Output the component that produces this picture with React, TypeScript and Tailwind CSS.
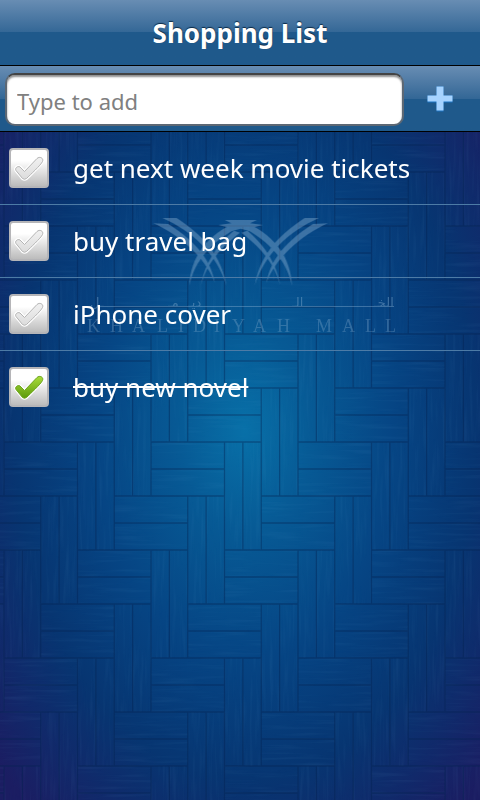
import { useState } from 'react'

const initialItems = [
  { id: 1, text: 'get next week movie tickets', done: false },
  { id: 2, text: 'buy travel bag', done: false },
  { id: 3, text: 'iPhone cover', done: false },
  { id: 4, text: 'buy new novel', done: true },
]

// Basket weave: every row holds one flat pair and two upright ones, moved one cell to the left per row
const CELL_W = 36.75
const CELL_H = 54
const rows = [0, 1, 2, 3]

const flatCells = rows.flatMap((r) => {
  const x = ((4 - r) % 4) * CELL_W
  const y = r * CELL_H
  return [
    { x, y },
    { x: x - 4 * CELL_W, y },
  ]
})

const uprightCells = rows.flatMap((r) => {
  const x = ((6 - r) % 4) * CELL_W
  const y = r * CELL_H
  return [
    { x, y },
    { x, y: y - 4 * CELL_H },
  ]
})

const flatPath = flatCells
  .map(({ x, y }) => `M${x} ${y}h${CELL_W * 2}v${CELL_H}h${-CELL_W * 2}z`)
  .join('')
const uprightPath = uprightCells
  .map(({ x, y }) => `M${x} ${y}h${CELL_W}v${CELL_H * 2}h${-CELL_W}z`)
  .join('')
const seamPath =
  flatCells.map(({ x, y }) => `M${x} ${y + CELL_H / 2}h${CELL_W * 2}`).join('') +
  uprightCells.map(({ x, y }) => `M${x + CELL_W / 2} ${y}v${CELL_H * 2}`).join('')

const weave = { x: 4, y: 10, width: CELL_W * 4, height: CELL_H * 4, patternUnits: 'userSpaceOnUse' }

const tickPath =
  'M8 22.500C6.500 20.500 9.500 17.500 12 19L16.500 23.500L29 10.500C31.500 8 36 10 34.500 13.500C33 17 22 27 18.500 30.500Q16.500 32 14.500 30.500Z'

function Blades() {
  return (
    <>
      <path d="M97 54H140C185 85 270 140 290 258C262 165 190 95 97 54Z" />
      <path d="M70 70L115 72C170 108 240 160 255 250C228 175 150 105 70 70Z" />
      <path d="M296 78C236 108 180 170 178 258C190 198 228 138 314 88Z" />
      <path d="M312 92C268 128 224 184 213 258C226 202 260 152 330 98Z" />
    </>
  )
}

function Backdrop() {
  return (
    <svg className="absolute inset-0 h-full w-full" aria-hidden="true">
      <defs>
        <radialGradient id="glow" gradientUnits="userSpaceOnUse" cx="0" cy="0" r="1" gradientTransform="translate(245 430) scale(330 500)">
          <stop offset="0" stopColor="#0870a8" />
          <stop offset="0.2" stopColor="#075a95" />
          <stop offset="0.45" stopColor="#064584" />
          <stop offset="0.7" stopColor="#073571" />
          <stop offset="0.86" stopColor="#11296a" />
          <stop offset="1" stopColor="#1b1d62" />
        </radialGradient>
        <pattern id="flat" {...weave}>
          <path d={flatPath} fill="#fff" />
        </pattern>
        <pattern id="upright" {...weave}>
          <path d={uprightPath} fill="#fff" />
        </pattern>
        <pattern id="seams" {...weave}>
          <path d={flatPath + uprightPath + seamPath} fill="none" stroke="#02204f" strokeOpacity="0.4" strokeWidth="1.3" />
        </pattern>
        <mask id="flatMask">
          <rect width="100%" height="100%" fill="url(#flat)" />
        </mask>
        <mask id="uprightMask">
          <rect width="100%" height="100%" fill="url(#upright)" />
        </mask>
        <filter id="grainFlat" x="0" y="0" width="100%" height="100%">
          <feTurbulence type="fractalNoise" baseFrequency="0.02 0.3" numOctaves="2" seed="4" />
          <feColorMatrix values="0 0 0 0 0.2  0 0 0 0 0.5  0 0 0 0 0.8  2 0 0 0 -0.9" />
        </filter>
        <filter id="grainUpright" x="0" y="0" width="100%" height="100%">
          <feTurbulence type="fractalNoise" baseFrequency="0.3 0.02" numOctaves="2" seed="9" />
          <feColorMatrix values="0 0 0 0 0.2  0 0 0 0 0.5  0 0 0 0 0.8  2 0 0 0 -0.9" />
        </filter>
      </defs>
      <rect width="100%" height="100%" fill="url(#glow)" />
      <g mask="url(#flatMask)">
        <rect width="100%" height="100%" filter="url(#grainFlat)" opacity="0.07" />
      </g>
      <g mask="url(#uprightMask)">
        <rect width="100%" height="100%" filter="url(#grainUpright)" opacity="0.07" />
      </g>
      <rect width="100%" height="100%" fill="url(#seams)" />

      {/* Mall logo */}
      <g fill="#8fb4d4" opacity="0.4">
        <g transform="translate(130 200) scale(0.3333)">
          <Blades />
          <g transform="translate(664 0) scale(-1 1)">
            <Blades />
          </g>
          <path d="M284 60H381L360 70L399 75L360 85L370 96L332 86L294 96L304 85L265 75L304 70Z" />
        </g>
        <path d="M98 306H394V307H98Z" />
        <g fontFamily='"DejaVu Sans", sans-serif' fontSize="13">
          <text x="374" y="307">الخـ</text>
          <text x="292" y="307">الـ</text>
          <text x="188" y="307">ديـ</text>
          <text x="168" y="307">مـ</text>
          <text x="90" y="307">ـل</text>
        </g>
        <text
          x="87 110 132 157 178 193 214 232 253 277 300 316 342 365 385"
          y="332"
          fontFamily='"Liberation Serif", serif'
          fontSize="18"
          opacity="0.8"
        >
          KHALIDIYAH MALL
        </text>
      </g>
    </svg>
  )
}

function CheckBox({ label, checked, onChange }: { label: string; checked: boolean; onChange: () => void }) {
  return (
    <span className="relative block h-10 w-10 shrink-0">
      <input
        type="checkbox"
        aria-label={label}
        checked={checked}
        onChange={onChange}
        className="block h-10 w-10 appearance-none rounded border-2 border-[#b5b5b8] bg-linear-to-b from-white from-30% to-[#bcbcbc]"
      />
      <svg viewBox="0 0 40 40" className="pointer-events-none absolute inset-0 h-10 w-10">
        <defs>
          <linearGradient id="tickOn" x1="0" y1="0" x2="0" y2="1">
            <stop offset="0" stopColor="#a9dc3a" />
            <stop offset="1" stopColor="#5c9a0c" />
          </linearGradient>
          <linearGradient id="tickOff" x1="0" y1="0" x2="0" y2="1">
            <stop offset="0" stopColor="#f1f1f1" />
            <stop offset="1" stopColor="#dcdcdc" />
          </linearGradient>
        </defs>
        <g transform="translate(-1 0)">
          <path d={tickPath} fill="none" stroke="#fff" strokeWidth="3" />
          <path
            d={tickPath}
            fill={checked ? 'url(#tickOn)' : 'url(#tickOff)'}
            stroke={checked ? '#6da51d' : '#b4b4b4'}
          />
        </g>
      </svg>
    </span>
  )
}

export default function App() {
  const [items, setItems] = useState(initialItems)
  const [draft, setDraft] = useState('')

  const toggle = (id: number) =>
    setItems(items.map((item) => (item.id === id ? { ...item, done: !item.done } : item)))

  const add = () => {
    if (!draft.trim()) return
    setItems([...items, { id: Date.now(), text: draft.trim(), done: false }])
    setDraft('')
  }

  return (
    <div className="relative min-h-screen overflow-hidden bg-[#08346f] font-['Noto_Sans',sans-serif]">
      <Backdrop />
      <div className="relative">
        <header className="flex h-[66px] items-center justify-center border-b border-black bg-linear-to-b from-[#688db3] from-0% via-[#336796] via-50% to-[#1f598b] to-50% pt-0.5">
          <h1 className="text-[26px] font-bold text-white [text-shadow:0_-1px_1px_#0b2a47]">Shopping List</h1>
        </header>

        {/* Add form */}
        <form
          className="flex h-[66px] items-center border-b border-black bg-linear-to-b from-[#688db3] from-0% via-[#336796] via-50% to-[#1f598b] to-50% pl-[5px]"
          onSubmit={(e) => {
            e.preventDefault()
            add()
          }}
        >
          <input
            type="text"
            aria-label="Type to add"
            placeholder="Type to add"
            value={draft}
            onChange={(e) => setDraft(e.target.value)}
            className="mt-px h-[53px] min-w-0 flex-1 rounded-[10px] border-2 border-[#5d6874] border-t-[#444] bg-white px-[10px] pt-1 text-[22px] text-black shadow-[inset_0_2px_2px_#8f8f8f] outline-none placeholder:text-[#808080]"
          />
          <button type="submit" aria-label="Add" className="flex h-full w-[76px] items-center justify-center pr-1">
            <svg viewBox="0 0 28 28" className="h-7 w-7">
              <path d="M10.500 1.500h7v9h9v7h-9v9h-7v-9h-9v-7h9z" fill="#1d74c4" />
              <path d="M10.500 1.500h7v9h9v6h-9v9h-7v-9h-9v-6h9z" fill="#a6d3ff" />
            </svg>
          </button>
        </form>

        <ul>
          {items.map((item) => (
            <li
              key={item.id}
              className="flex h-[73px] items-center gap-6 border-b border-[#4d7ba6] pl-[9px] last:border-transparent"
            >
              <CheckBox label={item.text} checked={item.done} onChange={() => toggle(item.id)} />
              <span className={item.done ? 'text-[26px] text-white line-through' : 'text-[26px] text-white'}>
                {item.text}
              </span>
            </li>
          ))}
        </ul>
      </div>
    </div>
  )
}
